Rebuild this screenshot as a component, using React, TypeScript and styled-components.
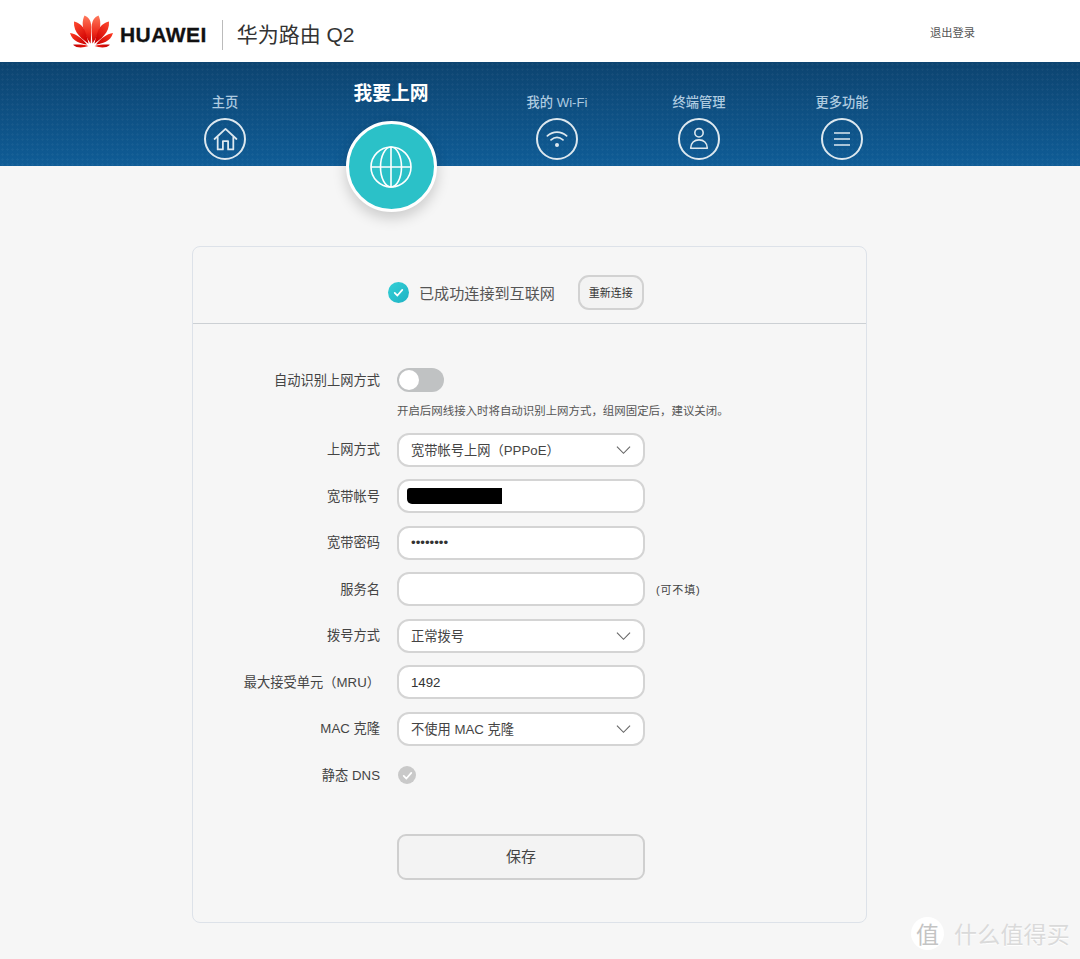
import React from "react";
import styled, { createGlobalStyle } from "styled-components";

const Global = createGlobalStyle`
  html, body { margin: 0; padding: 0; background: #f6f6f6; }
  body { font-family: "Liberation Sans", "Noto Sans CJK SC", sans-serif; color: #444; }
  * { box-sizing: border-box; }
`;

const Page = styled.div`
  position: relative;
  width: 1080px;
  height: 959px;
  overflow: hidden;
  background: #f6f6f6;
`;

const Header = styled.header`
  height: 62px;
  background: #fff;
  display: flex;
  align-items: center;
  padding: 8px 105px 0 70px;
`;

const LogoMark = styled.svg`
  flex: none;
  margin-bottom: 7px;
`;

const LogoText = styled.span`
  margin-left: 7px;
  font-size: 21px;
  font-weight: 700;
  letter-spacing: 0.45px;
  color: #111;
  -webkit-text-stroke: 0.3px #111;
`;

const Divider = styled.span`
  width: 1px;
  height: 30px;
  margin: 0 14px 0 15px;
  background: #bbb;
`;

const Title = styled.span`
  margin-bottom: 4px;
  font-size: 21px;
  color: #333;
`;

const Logout = styled.a`
  margin-left: auto;
  margin-bottom: 6px;
  font-size: 11.25px;
  color: #555;
`;

const Nav = styled.nav`
  position: relative;
  z-index: 1;
  height: 104px;
  padding-left: 165px;
  display: grid;
  grid-template-columns: 120px 212px 120px 164px 122px;
  align-content: start;
  background-color: #0f5186;
  background-image:
    radial-gradient(rgba(255, 255, 255, 0.035) 1px, transparent 1.2px),
    linear-gradient(180deg, #0d4470 0%, #0f5c96 100%);
  background-size: 5px 5px, 100% 100%;
`;

const NavItem = styled.div<{ $active?: boolean }>`
  display: flex;
  flex-direction: column;
  align-items: center;
  padding-top: ${(p) => (p.$active ? "20px" : "32px")};
`;

const NavLabel = styled.span<{ $active?: boolean }>`
  font-size: ${(p) => (p.$active ? "18.75px" : "13.25px")};
  line-height: ${(p) => (p.$active ? "24px" : "18px")};
  font-weight: ${(p) => (p.$active ? 700 : 500)};
  color: ${(p) => (p.$active ? "#fff" : "#aecbe0")};
  white-space: nowrap;
`;

const NavCircle = styled.span`
  width: 42px;
  height: 42px;
  margin-top: 6px;
  border-radius: 50%;
  border: 2px solid #dde8ef;
  display: flex;
  align-items: center;
  justify-content: center;
  color: #dde8ef;
`;

const ActiveCircle = styled.span`
  width: 91px;
  height: 91px;
  margin-top: 15px;
  flex: none;
  border-radius: 50%;
  border: 3px solid #fff;
  background: #2bc1c8;
  box-shadow: 0 6px 14px rgba(0, 0, 0, 0.18);
  display: flex;
  align-items: center;
  justify-content: center;
  color: #fff;
`;

const Card = styled.section`
  width: 675px;
  height: 677px;
  margin: 80px 0 0 192px;
  border: 1px solid #dde2e9;
  border-radius: 8px;
`;

const Status = styled.div`
  height: 77px;
  border-bottom: 1px solid #ccd0d4;
  display: flex;
  align-items: center;
  padding: 14px 0 0 195px;
`;

const StatusCheck = styled.span`
  width: 21px;
  height: 21px;
  border-radius: 50%;
  background: linear-gradient(135deg, #34d0d6, #1fb2c4);
  display: flex;
  align-items: center;
  justify-content: center;
`;

const StatusText = styled.span`
  margin-left: 10px;
  font-size: 15.1px;
  color: #555;
`;

const Reconnect = styled.button`
  width: 66px;
  height: 35px;
  margin-left: 23px;
  padding: 0;
  font: inherit;
  font-size: 11px;
  color: #333;
  background: #f3f3f3;
  border: 2px solid #d2d2d2;
  border-radius: 11px;
`;

const Form = styled.div`
  padding-top: 44px;
`;

const Row = styled.div<{ $h?: number }>`
  height: ${(p) => p.$h ?? 34}px;
  margin-bottom: 12.5px;
  display: flex;
  align-items: center;
`;

const Label = styled.label`
  width: 187px;
  margin-right: 17px;
  padding-bottom: 2px;
  flex: none;
  text-align: right;
  font-size: 13.25px;
  color: #444;
  white-space: nowrap;
`;

const Toggle = styled.span`
  width: 47px;
  height: 24px;
  padding: 2px;
  border-radius: 12px;
  background: #c0c2c3;
  display: flex;
`;

const Knob = styled.span`
  width: 20px;
  height: 20px;
  border-radius: 50%;
  background: #fff;
`;

const Hint = styled.p`
  margin: -0.5px 0 14.5px 204px;
  height: 14px;
  font-size: 11.45px;
  line-height: 14px;
  color: #555;
  white-space: nowrap;
`;

const Field = styled.div`
  width: 248px;
  height: 34px;
  flex: none;
  padding: 0 12.5px 0 12px;
  background: #fff;
  border: 2px solid #d4d4d4;
  border-radius: 12px;
  display: flex;
  align-items: center;
  justify-content: space-between;
  font-size: 13.25px;
  color: #444;
  white-space: nowrap;
`;

const FieldInput = styled.input`
  width: 100%;
  padding: 0;
  border: 0;
  outline: 0;
  background: transparent;
  font: inherit;
  color: #333;
`;

const Redacted = styled.span`
  display: block;
  width: 95px;
  height: 16px;
  margin-left: -4px;
  background: #000;
  border-radius: 3px 0 0 5px;
`;

const Note = styled.span`
  margin-left: 11px;
  font-size: 11px;
  letter-spacing: 0.85px;
  color: #444;
`;

const DnsCheck = styled.span`
  width: 18px;
  height: 18px;
  margin-left: 1px;
  border-radius: 50%;
  background: #c9c9c9;
  display: flex;
  align-items: center;
  justify-content: center;
`;

const ChevronMark = styled.svg`
  flex: none;
`;

const Save = styled.button`
  display: block;
  width: 248px;
  height: 46px;
  margin: 41.5px 0 0 204px;
  padding: 0 0 2px;
  font: inherit;
  font-size: 15px;
  color: #444;
  background: #f3f3f3;
  border: 2px solid #cfcfcf;
  border-radius: 9px;
`;

const Watermark = styled.div`
  position: absolute;
  left: 911px;
  top: 916px;
  display: flex;
  align-items: center;
  gap: 10px;
  color: #dadada;
  text-shadow: 0 1px 1px #fff;
`;

const WatermarkBadge = styled.span`
  width: 33px;
  height: 33px;
  border-radius: 50%;
  background: #fff;
  display: flex;
  align-items: center;
  justify-content: center;
  font-size: 23px;
  color: #c4c4c4;
`;

const WatermarkText = styled.span`
  font-size: 23px;
  letter-spacing: 0.2px;
`;

const Logo = () => {
  const petals = (
    <>
      <path d="M20.6 28.5C16 22 9.5 11 14.5 0.5C18.5 2 21.3 6 21.3 12C21.3 18 21 24 20.6 28.5Z" fill="url(#petalA)" />
      <path d="M18.6 28.8C13 24.5 3 18 4 6.5C9 7.5 13 11 15 16C16.5 20 17.8 25 18.6 28.8Z" fill="url(#petalB)" />
      <path d="M17 29.6C11 28.5 2.5 27 0 18C6 18.5 13 24 17 29.6Z" fill="url(#petalC)" />
      <path d="M18.5 31C13 32.8 7 33.5 3 29.7C8 29.3 14 29.8 18.5 31Z" fill="url(#petalD)" />
    </>
  );
  return (
    <LogoMark width="43" height="34" viewBox="0 0 43 34" aria-hidden="true">
      <defs>
        <linearGradient id="petalA" x1="0" y1="0" x2="0" y2="1">
          <stop offset="0" stopColor="#ff7a5c" />
          <stop offset="0.6" stopColor="#ee2b1c" />
          <stop offset="1" stopColor="#c40000" />
        </linearGradient>
        <linearGradient id="petalB" x1="0" y1="0" x2="0.6" y2="1">
          <stop offset="0" stopColor="#ff4a30" />
          <stop offset="1" stopColor="#d00000" />
        </linearGradient>
        <linearGradient id="petalC" x1="0" y1="0" x2="1" y2="1">
          <stop offset="0" stopColor="#ff3a22" />
          <stop offset="1" stopColor="#c80000" />
        </linearGradient>
        <linearGradient id="petalD" x1="0" y1="0" x2="1" y2="0">
          <stop offset="0" stopColor="#c00000" />
          <stop offset="1" stopColor="#ee1c10" />
        </linearGradient>
      </defs>
      <g>{petals}</g>
      <g transform="matrix(-1 0 0 1 43 0)">{petals}</g>
    </LogoMark>
  );
};

const HomeIcon = () => (
  <svg width="25" height="25" viewBox="0 0 24 24" fill="none" stroke="currentColor" strokeWidth="1.7" strokeLinejoin="round" strokeLinecap="round">
    <path d="M1.5 11.5L12 1.8L22.5 11.5" />
    <path d="M4.5 10V21.5H9.5V13.5H14.5V21.5H19.5V10" />
  </svg>
);

const WifiIcon = () => (
  <svg width="22" height="22" viewBox="0 0 24 24" fill="none" stroke="currentColor" strokeWidth="1.9" strokeLinecap="round">
    <path d="M1.5 8.5C7.5 3 16.5 3 22.5 8.5" />
    <path d="M5.5 13C9.5 9.5 14.5 9.5 18.5 13" />
    <circle cx="12" cy="18.5" r="2.2" fill="currentColor" stroke="none" />
  </svg>
);

const UserIcon = () => (
  <svg width="20" height="24" viewBox="0 0 24 28" fill="none" stroke="currentColor" strokeWidth="1.9" strokeLinejoin="round">
    <circle cx="12" cy="6.5" r="5" />
    <path d="M2 25C2 18.5 6.5 15 12 15C17.5 15 22 18.5 22 25Z" />
  </svg>
);

const MenuIcon = () => (
  <svg width="18" height="16" viewBox="0 0 18 16" fill="none" stroke="currentColor" strokeWidth="1.7">
    <path d="M1 2H17M1 8H17M1 14H17" />
  </svg>
);

const GlobeIcon = () => (
  <svg width="42" height="42" viewBox="0 0 42 42" fill="none" stroke="currentColor" strokeWidth="1.6">
    <circle cx="21" cy="21" r="20" />
    <ellipse cx="21" cy="21" rx="10.5" ry="20" />
    <path d="M21 1V41M1 21H41" />
  </svg>
);

const Chevron = () => (
  <ChevronMark width="15" height="10" viewBox="0 0 16 10" fill="none" stroke="#666" strokeWidth="1.2">
    <path d="M1 1.5L8 8.5L15 1.5" />
  </ChevronMark>
);

const Tick = ({ size }: { size: number }) => (
  <svg width={size} height={size} viewBox="0 0 12 12" fill="none" stroke="#fff" strokeWidth="1.6" strokeLinecap="round" strokeLinejoin="round">
    <path d="M2.5 6.3L5 8.8L9.5 3.6" />
  </svg>
);

const navItems = [
  { label: "主页", icon: <HomeIcon /> },
  { label: "我要上网", active: true, icon: <GlobeIcon /> },
  { label: "我的 Wi-Fi", icon: <WifiIcon /> },
  { label: "终端管理", icon: <UserIcon /> },
  { label: "更多功能", icon: <MenuIcon /> },
];

export default function App() {
  return (
    <Page>
      <Global />
      <Header>
        <Logo />
        <LogoText>HUAWEI</LogoText>
        <Divider />
        <Title>华为路由 Q2</Title>
        <Logout>退出登录</Logout>
      </Header>
      <Nav>
        {navItems.map((n) => (
          <NavItem key={n.label} $active={n.active}>
            <NavLabel $active={n.active}>{n.label}</NavLabel>
            {n.active ? <ActiveCircle>{n.icon}</ActiveCircle> : <NavCircle>{n.icon}</NavCircle>}
          </NavItem>
        ))}
      </Nav>
      <Card>
        <Status>
          <StatusCheck>
            <Tick size={13} />
          </StatusCheck>
          <StatusText>已成功连接到互联网</StatusText>
          <Reconnect>重新连接</Reconnect>
        </Status>
        <Form>
          <Row $h={24}>
            <Label>自动识别上网方式</Label>
            <Toggle>
              <Knob />
            </Toggle>
          </Row>
          <Hint>开启后网线接入时将自动识别上网方式，组网固定后，建议关闭。</Hint>
          <Row>
            <Label>上网方式</Label>
            <Field>
              宽带帐号上网（PPPoE）
              <Chevron />
            </Field>
          </Row>
          <Row>
            <Label>宽带帐号</Label>
            <Field>
              <Redacted />
            </Field>
          </Row>
          <Row>
            <Label>宽带密码</Label>
            <Field>
              <FieldInput type="password" readOnly value="12345678" />
            </Field>
          </Row>
          <Row>
            <Label>服务名</Label>
            <Field>
              <FieldInput readOnly value="" />
            </Field>
            <Note>(可不填)</Note>
          </Row>
          <Row>
            <Label>拨号方式</Label>
            <Field>
              正常拨号
              <Chevron />
            </Field>
          </Row>
          <Row>
            <Label>最大接受单元（MRU）</Label>
            <Field>
              <FieldInput readOnly value="1492" />
            </Field>
          </Row>
          <Row>
            <Label>MAC 克隆</Label>
            <Field>
              不使用 MAC 克隆
              <Chevron />
            </Field>
          </Row>
          <Row>
            <Label>静态 DNS</Label>
            <DnsCheck>
              <Tick size={13} />
            </DnsCheck>
          </Row>
          <Save>保存</Save>
        </Form>
      </Card>
      <Watermark>
        <WatermarkBadge>值</WatermarkBadge>
        <WatermarkText>什么值得买</WatermarkText>
      </Watermark>
    </Page>
  );
}
